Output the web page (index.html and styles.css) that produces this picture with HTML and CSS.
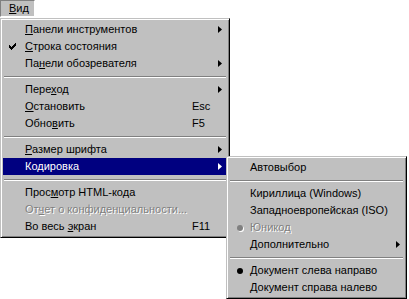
FILE: index.html
```html
<!DOCTYPE html>
<html lang="ru">
  <head>
    <meta charset="UTF-8" />
    <title>Вид</title>
    <link rel="stylesheet" href="styles.css">
  </head>
  <body>
    <div class="menubar">
      <div class="menubar-item pressed"><u>В</u>ид</div>
    </div>

    <div class="menu main-menu">
      <div class="item"><span class="mark"></span><span class="label"><u>П</u>анели инструментов</span><span class="key"></span><span class="arrow"><svg width="4" height="7" viewBox="0 0 4 7"><path d="M0 0L4 3.5L0 7Z"/></svg></span></div>
      <div class="item"><span class="mark"><svg width="7" height="7" viewBox="0 0 7 7"><path d="M6 0h1v1h-1zM5 1h2v1h-2zM0 2h1v1h-1zM4 2h3v1h-3zM0 3h2v1h-2zM3 3h3v1h-3zM0 4h5v1h-5zM1 5h3v1h-3zM2 6h1v1h-1z" fill="#000"/></svg></span><span class="label"><u>С</u>трока состояния</span><span class="key"></span><span class="arrow"></span></div>
      <div class="item"><span class="mark"></span><span class="label">Па<u>н</u>ели обозревателя</span><span class="key"></span><span class="arrow"><svg width="4" height="7" viewBox="0 0 4 7"><path d="M0 0L4 3.5L0 7Z"/></svg></span></div>
      <div class="sep"></div>
      <div class="item"><span class="mark"></span><span class="label">Пере<u>х</u>од</span><span class="key"></span><span class="arrow"><svg width="4" height="7" viewBox="0 0 4 7"><path d="M0 0L4 3.5L0 7Z"/></svg></span></div>
      <div class="item"><span class="mark"></span><span class="label"><u>О</u>становить</span><span class="key">Esc</span><span class="arrow"></span></div>
      <div class="item"><span class="mark"></span><span class="label">Обно<u>в</u>ить</span><span class="key">F5</span><span class="arrow"></span></div>
      <div class="sep"></div>
      <div class="item"><span class="mark"></span><span class="label"><u>Р</u>азмер шрифта</span><span class="key"></span><span class="arrow"><svg width="4" height="7" viewBox="0 0 4 7"><path d="M0 0L4 3.5L0 7Z"/></svg></span></div>
      <div class="item active has-sub">
        <span class="mark"></span><span class="label">Кодировка</span><span class="key"></span><span class="arrow"><svg width="4" height="7" viewBox="0 0 4 7"><path d="M0 0L4 3.5L0 7Z"/></svg></span>

        <!-- подменю кодировки -->
        <div class="menu sub-menu">
          <div class="item"><span class="mark"></span><span class="label">Автовыбор</span><span class="arrow"></span></div>
          <div class="sep"></div>
          <div class="item"><span class="mark"></span><span class="label">Кириллица (Windows)</span><span class="arrow"></span></div>
          <div class="item"><span class="mark"></span><span class="label">Западноевропейская (ISO)</span><span class="arrow"></span></div>
          <div class="item disabled"><span class="mark"><span class="dot"></span></span><span class="label">Юникод</span><span class="arrow"></span></div>
          <div class="item"><span class="mark"></span><span class="label"><u>Д</u>ополнительно</span><span class="arrow"><svg width="4" height="7" viewBox="0 0 4 7"><path d="M0 0L4 3.5L0 7Z"/></svg></span></div>
          <div class="sep"></div>
          <div class="item"><span class="mark"><span class="dot"></span></span><span class="label">Документ слева направо</span><span class="arrow"></span></div>
          <div class="item"><span class="mark"></span><span class="label">Документ справа налево</span><span class="arrow"></span></div>
        </div>
      </div>
      <div class="sep"></div>
      <div class="item"><span class="mark"></span><span class="label">Прос<u>м</u>отр HTML-кода</span><span class="key"></span><span class="arrow"></span></div>
      <div class="item disabled"><span class="mark"></span><span class="label">От<u>ч</u>ет о конфиденциальности...</span><span class="key"></span><span class="arrow"></span></div>
      <div class="item"><span class="mark"></span><span class="label">Во весь <u>э</u>кран</span><span class="key">F11</span><span class="arrow"></span></div>
    </div>
  </body>
</html>
```

FILE: styles.css
```css
* {
  margin: 0;
  padding: 0;
  box-sizing: border-box;
}
html,
body {
  height: 100%;
}
body {
  min-height: 299px;
  background: #fff;
  font-family: "Liberation Sans", Arial, sans-serif;
  font-size: 11px;
  color: #000;
}
u {
  text-decoration: underline;
  text-underline-offset: 1px;
}

/* строка меню */
.menubar {
  display: flex;
  height: 18px;
}
.menubar-item {
  width: 35px;
  height: 17px;
  line-height: 15px;
  padding-left: 8px;
  background: #c0c0c0;
}
.pressed {
  border-top: 1px solid #808080;
  border-left: 1px solid #808080;
  border-bottom: 1px solid #fff;
  border-right: 1px solid #fff;
}

/* выпадающее меню */
.menu {
  background: #c0c0c0;
  border: 1px solid;
  border-color: #c0c0c0 #000 #000 #c0c0c0;
  box-shadow: inset 1px 1px #fff, inset -1px -1px #808080;
  padding: 2px;
}
.main-menu {
  width: 230px;
}
.item {
  display: flex;
  align-items: center;
  height: 17px;
  line-height: 17px;
  white-space: nowrap;
}
.mark {
  width: 22px;
  flex: none;
  display: flex;
  align-items: center;
  padding-left: 6px;
}
.label {
  flex: 1;
}
.key {
  width: 24px;
  flex: none;
}
.arrow {
  width: 11px;
  flex: none;
  display: flex;
  align-items: center;
  padding-left: 2px;
}
.arrow svg {
  fill: #000;
}
.sep {
  height: 9px;
  padding-top: 4px;
  margin: 0 1px;
}
.sep::before {
  content: "";
  display: block;
  border-top: 1px solid #808080;
  border-bottom: 1px solid #fff;
}

.active {
  background: #000080;
  color: #fff;
}
.active > .arrow svg {
  fill: #fff;
}
.has-sub {
  position: relative;
}
.disabled {
  color: #808080;
  text-shadow: 1px 1px 0 #fff;
}

/* подменю */
.sub-menu {
  position: absolute;
  left: 223px;
  top: -2px;
  width: 181px;
  color: #000;
  z-index: 1;
}
.sub-menu .mark {
  width: 21px;
  padding-left: 8px;
}
.sub-menu .arrow {
  width: 9px;
  padding-left: 1px;
}
.dot {
  display: block;
  width: 6px;
  height: 6px;
  border-radius: 50%;
  background: #000;
}
.disabled .dot {
  background: #808080;
  box-shadow: 1px 1px 0 #fff;
}
```
